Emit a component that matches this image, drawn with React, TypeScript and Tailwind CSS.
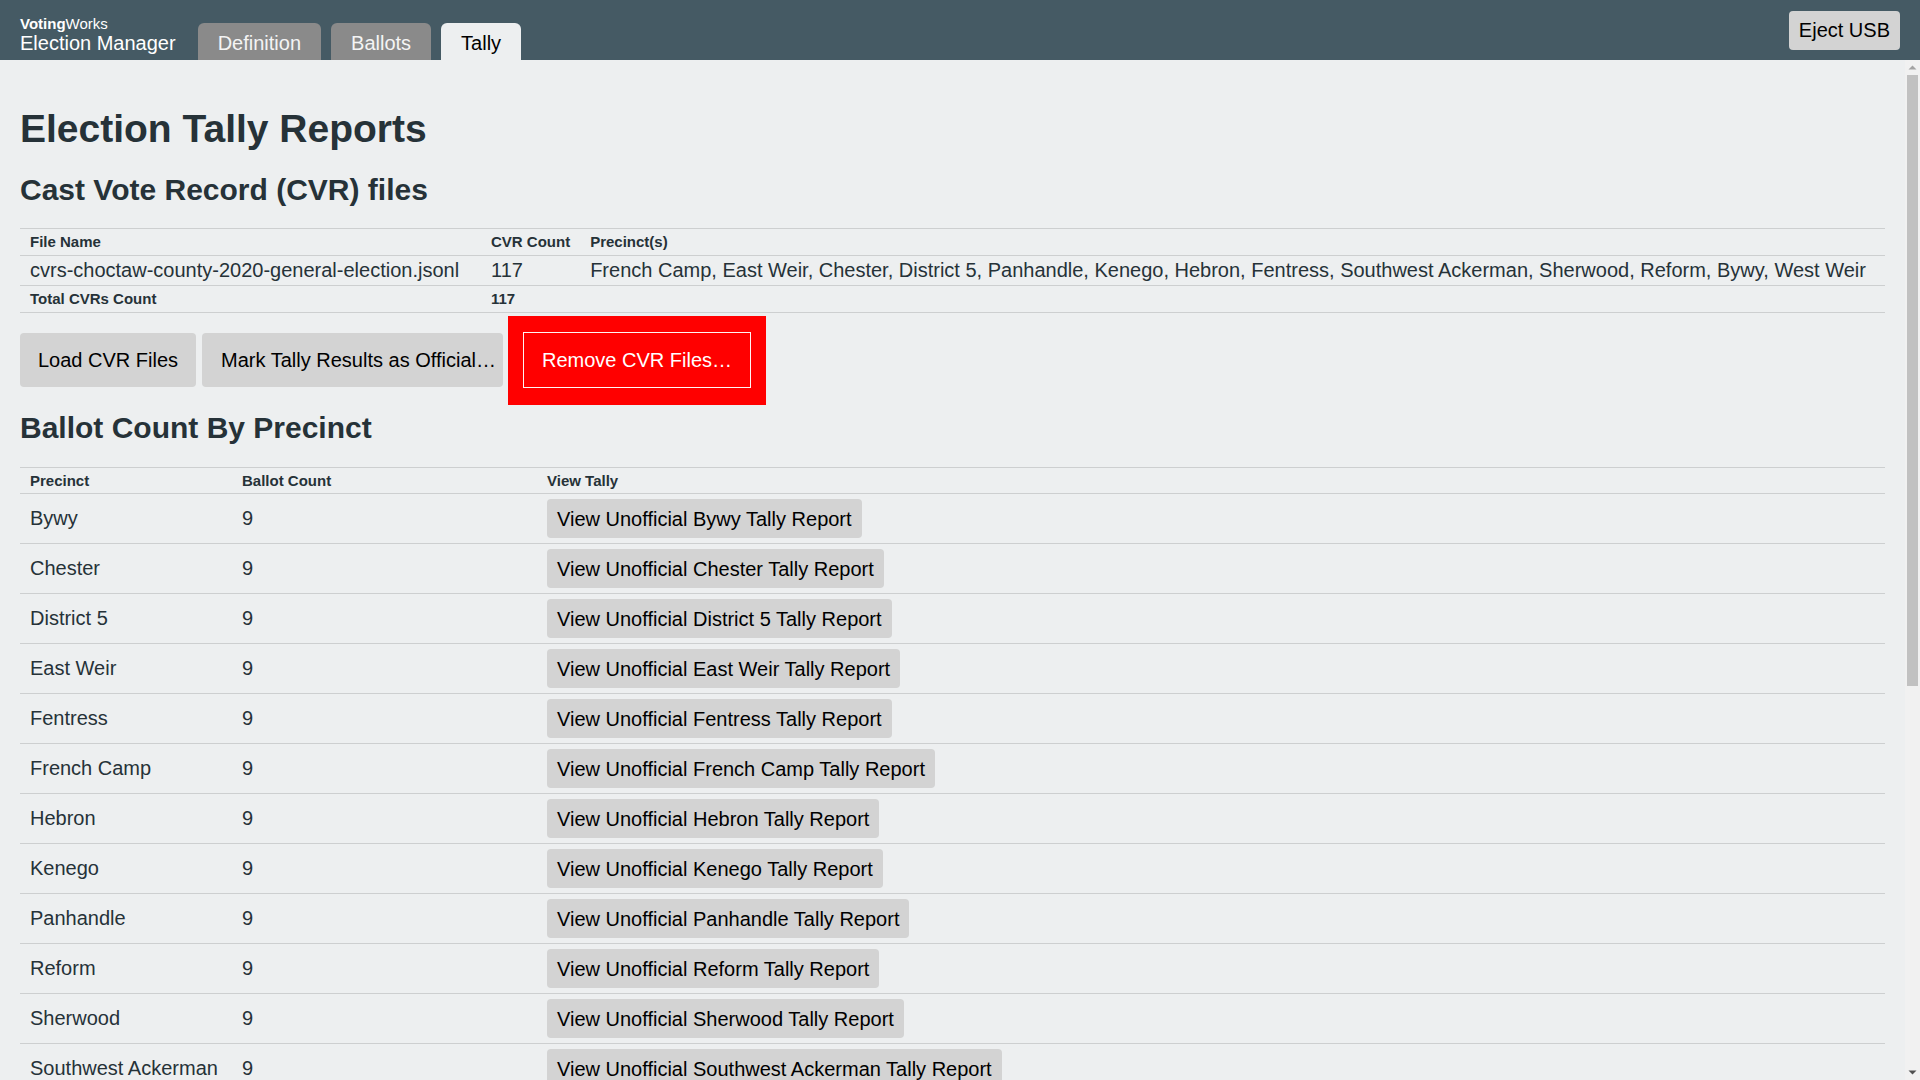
import React from "react";

const precincts = [
  "Bywy",
  "Chester",
  "District 5",
  "East Weir",
  "Fentress",
  "French Camp",
  "Hebron",
  "Kenego",
  "Panhandle",
  "Reform",
  "Sherwood",
  "Southwest Ackerman",
  "West Weir",
];

function Scrollbar() {
  return (
    <div className="flex w-[15px] shrink-0 flex-col bg-[#f1f1f1]">
      <div className="h-[15px] shrink-0">
        <svg width="15" height="15" viewBox="0 0 15 15">
          <polygon points="3.5,9.5 7.5,5.5 11.5,9.5" fill="#a3a3a3" />
        </svg>
      </div>
      <div className="flex-1">
        <div className="mx-[2px] h-[611px] bg-[#c1c1c1]"></div>
      </div>
      <div className="h-[15px] shrink-0">
        <svg width="15" height="15" viewBox="0 0 15 15">
          <polygon points="3.5,5.5 7.5,9.5 11.5,5.5" fill="#505050" />
        </svg>
      </div>
    </div>
  );
}

export default function App() {
  return (
    <div className="flex h-screen flex-col overflow-hidden bg-[#edeff0] font-['Liberation_Sans',Arial,sans-serif] text-[#263238]">
      <header className="flex h-[60px] shrink-0 justify-between bg-[#455a64] px-[20px]">
        <div className="flex items-end">
          <div className="mb-[5px] mr-[22px] text-white">
            <div className="text-[15px] leading-[16px]">
              <span className="font-bold">Voting</span>Works
            </div>
            <div className="text-[20px] leading-[23px]">Election Manager</div>
          </div>
          <div className="flex items-end gap-[10px]">
            <div className="flex h-[37px] items-center rounded-t-[6px] bg-[#8a8a8a] px-[20px] pt-[3px] text-[20px] text-[#f4f4f4]">
              Definition
            </div>
            <div className="flex h-[37px] items-center rounded-t-[6px] bg-[#8a8a8a] px-[20px] pt-[3px] text-[20px] text-[#f4f4f4]">
              Ballots
            </div>
            <div className="flex h-[37px] items-center rounded-t-[6px] bg-[#edeff0] px-[20px] pt-[3px] text-[20px] text-black">
              Tally
            </div>
          </div>
        </div>
        <div className="flex items-center">
          <button className="h-[39px] rounded-[4px] bg-[#d3d3d3] px-[10px] text-[20px] leading-[24px] text-black">
            Eject USB
          </button>
        </div>
      </header>
      <div className="flex min-h-0 flex-1">
        <main className="min-w-0 flex-1 overflow-hidden px-[20px] pb-[20px]">
          <h1 className="mt-[46px] text-[39px] font-bold leading-[46px]">Election Tally Reports</h1>
          <h2 className="mt-[20px] text-[30px] font-bold leading-[36px]">Cast Vote Record (CVR) files</h2>
          <table className="mt-[20px] w-full border-collapse text-left">
            <thead>
              <tr className="border-y border-[#cdcfd0]">
                <th className="w-[461px] px-[10px] py-[5px] text-[15px] font-bold leading-[16px]">File Name</th>
                <th className="w-[99px] px-[10px] py-[5px] text-[15px] font-bold leading-[16px] whitespace-nowrap">CVR Count</th>
                <th className="px-[10px] py-[5px] text-[15px] font-bold leading-[16px]">Precinct(s)</th>
              </tr>
            </thead>
            <tbody>
              <tr className="border-b border-[#cdcfd0]">
                <td className="px-[10px] py-[3px] text-[20px] leading-[23px] whitespace-nowrap">
                  cvrs-choctaw-county-2020-general-election.jsonl
                </td>
                <td className="px-[10px] py-[3px] text-[20px] leading-[23px]">117</td>
                <td className="px-[10px] py-[3px] text-[20px] leading-[23px]">
                  French Camp, East Weir, Chester, District 5, Panhandle, Kenego, Hebron, Fentress, Southwest Ackerman, Sherwood, Reform, Bywy, West Weir
                </td>
              </tr>
              <tr className="border-b border-[#cdcfd0]">
                <td className="px-[10px] py-[5px] text-[15px] font-bold leading-[16px]">Total CVRs Count</td>
                <td className="px-[10px] py-[5px] text-[15px] font-bold leading-[16px]">117</td>
                <td className="px-[10px] py-[5px]"></td>
              </tr>
            </tbody>
          </table>
          <div className="mt-[20px] flex items-start">
            <button className="h-[54px] rounded-[4px] bg-[#d3d3d3] px-[18px] text-[20px] leading-[24px] text-black">
              Load CVR Files
            </button>
            <button className="ml-[6px] h-[54px] whitespace-nowrap rounded-[4px] bg-[#d3d3d3] pl-[19px] pr-[7px] text-[20px] leading-[24px] text-black">
              Mark Tally Results as Official…
            </button>
            <div className="relative ml-[20px] mt-[-1px]">
              <span className="absolute -bottom-[17px] -left-[15px] -right-[15px] -top-[16px] bg-[#ff0000]"></span>
              <span className="relative block border-[1.5px] border-[#fff4f4] bg-[#ff0000]">
                <button className="block h-[54px] rounded-[5px] bg-[#ff0000] px-[18px] text-[20px] leading-[24px] text-white">
                  Remove CVR Files…
                </button>
              </span>
            </div>
          </div>
          <h2 className="mt-[22px] text-[30px] font-bold leading-[36px]">Ballot Count By Precinct</h2>
          <table className="mt-[21px] w-full border-collapse text-left">
            <thead>
              <tr className="border-y border-[#cdcfd0]">
                <th className="w-[212px] px-[10px] py-[4px] text-[15px] font-bold leading-[17px]">Precinct</th>
                <th className="w-[305px] px-[10px] py-[4px] text-[15px] font-bold leading-[17px]">Ballot Count</th>
                <th className="px-[10px] py-[4px] text-[15px] font-bold leading-[17px]">View Tally</th>
              </tr>
            </thead>
            <tbody>
              {precincts.map((p) => (
                <tr key={p} className="border-b border-[#cdcfd0]">
                  <td className="px-[10px] py-[5px] text-[20px] leading-[23px] whitespace-nowrap">{p}</td>
                  <td className="px-[10px] py-[5px] text-[20px] leading-[23px]">9</td>
                  <td className="px-[10px] py-[5px]">
                    <button className="h-[39px] rounded-[4px] bg-[#d3d3d3] px-[10px] text-[20px] leading-[24px] text-black">
                      View Unofficial {p} Tally Report
                    </button>
                  </td>
                </tr>
              ))}
            </tbody>
          </table>
        </main>
        <Scrollbar />
      </div>
    </div>
  );
}
